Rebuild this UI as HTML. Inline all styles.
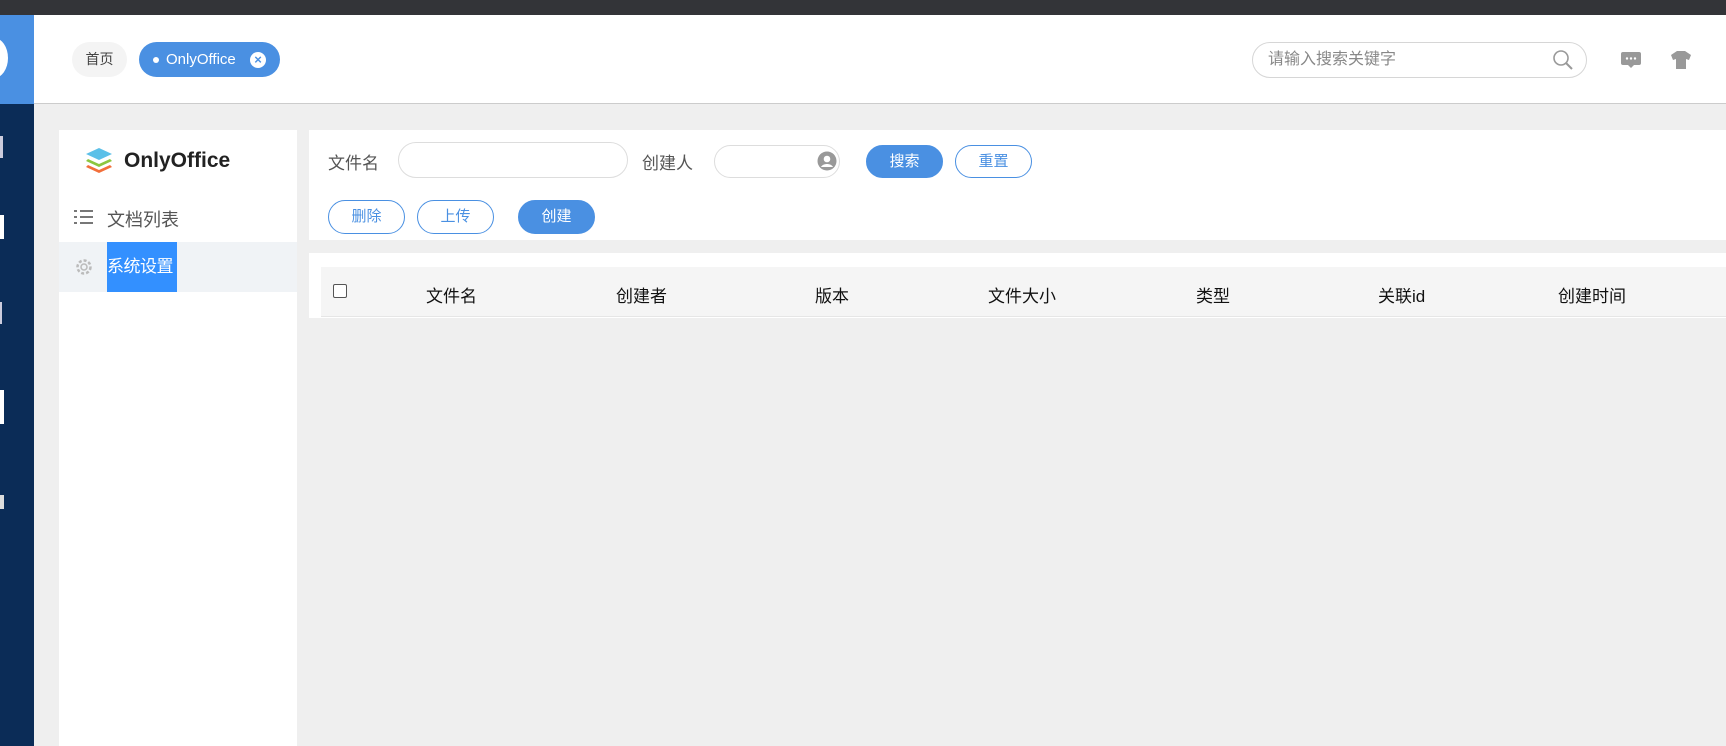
<!DOCTYPE html>
<html><head><meta charset="utf-8"><style>
*{box-sizing:border-box;margin:0;padding:0}
body{width:1726px;height:746px;overflow:hidden;background:#efefef;font-family:"Liberation Sans","Noto Sans CJK SC",sans-serif;position:relative;white-space:nowrap}
.a{position:absolute}
.btn{position:absolute;border:1px solid #4a90e2;border-radius:17px;color:#4a90e2;font-size:15px;text-align:center;background:#fff}
.btn.f{background:#4a90e2;color:#fff}
.th{position:absolute;top:282px;font-size:17px;color:#111}
</style></head><body>
<div class="a" style="left:0;top:0;width:1726px;height:15px;background:#333438"></div>
<div class="a" style="left:0;top:15px;width:34px;height:89px;background:#4a90e2"></div>
<div class="a" style="left:-20px;top:38px;width:28px;height:40px;border-radius:50%;background:#fff"></div>
<div class="a" style="left:0;top:104px;width:34px;height:642px;background:#0b2c57"></div>
<div class="a" style="left:0;top:136px;width:3px;height:22px;background:#ccd"></div>
<div class="a" style="left:0;top:215px;width:4px;height:24px;background:#fff"></div>
<div class="a" style="left:0;top:302px;width:2px;height:22px;background:#ccd"></div>
<div class="a" style="left:0;top:390px;width:4px;height:34px;background:#fff"></div>
<div class="a" style="left:0;top:495px;width:4px;height:14px;background:#ddd"></div>
<div class="a" style="left:34px;top:15px;width:1692px;height:89px;background:#fff;border-bottom:1px solid #ccc"></div>
<div class="a" style="left:72px;top:42px;width:55px;height:35px;border-radius:18px;background:#f4f4f4;font-size:14px;color:#444;line-height:35px;text-align:center">首页</div>
<div class="a" style="left:139px;top:42px;width:141px;height:35px;border-radius:18px;background:#4a90e2;color:#fff;font-size:15px;line-height:35px;padding-left:27px">OnlyOffice</div>
<div class="a" style="left:153px;top:57px;width:6px;height:6px;border-radius:50%;background:#fff"></div>
<div class="a" style="left:250px;top:52px;width:16px;height:16px;border-radius:50%;background:#fff;color:#4a90e2;font-size:13px;line-height:16px;text-align:center;font-weight:bold">×</div>
<div class="a" style="left:1252px;top:42px;width:335px;height:36px;border:1px solid #d6d6d6;border-radius:18px;font-size:16px;color:#888;line-height:34px;padding-left:15px">请输入搜索关键字</div>
<svg class="a" style="left:1552px;top:49px" width="22" height="22"><circle cx="9" cy="9" r="7" fill="none" stroke="#999" stroke-width="1.6"/><path d="M14 14l6 6" stroke="#999" stroke-width="2"/></svg>
<svg class="a" style="left:1620px;top:51px" width="22" height="18"><rect x="1" y="1" width="20" height="13" rx="2" fill="#999"/><path d="M8 14l3 3 3-3z" fill="#999"/><circle cx="7" cy="7.5" r="1.2" fill="#fff"/><circle cx="11" cy="7.5" r="1.2" fill="#fff"/><circle cx="15" cy="7.5" r="1.2" fill="#fff"/></svg>
<svg class="a" style="left:1670px;top:50px" width="22" height="20"><path d="M7 1h8l6 4-2 5-3-1v10H6V9L3 10 1 5z" fill="#999"/></svg>

<div class="a" style="left:59px;top:130px;width:238px;height:616px;background:#fff"></div>
<svg class="a" style="left:84px;top:147px" width="30" height="28"><path d="M15 1l13 6-13 6L2 7z" fill="#5bc0e8"/><path d="M4 12l11 5 11-5 2 2-13 6L2 14z" fill="#8cc63f"/><path d="M4 18l11 5 11-5 2 2-13 6L2 20z" fill="#f26f3b"/></svg>
<div class="a" style="left:124px;top:149px;font-size:21px;font-weight:bold;color:#222">OnlyOffice</div>
<svg class="a" style="left:74px;top:208px" width="20" height="18"><g fill="#777"><rect x="0" y="2" width="3" height="2"/><rect x="6" y="2" width="13" height="2"/><rect x="0" y="8" width="3" height="2"/><rect x="6" y="8" width="13" height="2"/><rect x="0" y="14" width="3" height="2"/><rect x="6" y="14" width="13" height="2"/></g></svg>
<div class="a" style="left:107px;top:206px;font-size:18px;color:#555">文档列表</div>
<div class="a" style="left:59px;top:242px;width:238px;height:50px;background:#f0f3f6"></div>
<svg class="a" style="left:75px;top:258px" width="18" height="18"><circle cx="9" cy="9" r="6.5" fill="none" stroke="#bbb" stroke-width="2.5" stroke-dasharray="3 2"/><circle cx="9" cy="9" r="3" fill="none" stroke="#bbb" stroke-width="1.5"/></svg>
<div class="a" style="left:107px;top:242px;width:70px;height:50px;background:#3390ff;color:#fff;font-size:17px;line-height:50px;letter-spacing:-0.5px;overflow:visible">系统设置</div>

<div class="a" style="left:309px;top:130px;width:1417px;height:110px;background:#fff"></div>
<div class="a" style="left:328px;top:149px;font-size:17px;color:#555">文件名</div>
<div class="a" style="left:398px;top:142px;width:230px;height:36px;border:1px solid #ddd;border-radius:18px"></div>
<div class="a" style="left:642px;top:149px;font-size:17px;color:#555">创建人</div>
<div class="a" style="left:714px;top:145px;width:126px;height:33px;border:1px solid #ddd;border-radius:17px"></div>
<svg class="a" style="left:817px;top:151px" width="20" height="20"><circle cx="10" cy="10" r="9.5" fill="#999"/><circle cx="10" cy="8" r="3.3" fill="#fff"/><path d="M4 16c2-4 10-4 12 0" fill="#fff"/></svg>
<div class="btn f" style="left:866px;top:145px;width:77px;height:33px;line-height:31px">搜索</div>
<div class="btn" style="left:955px;top:145px;width:77px;height:33px;line-height:31px">重置</div>
<div class="btn" style="left:328px;top:200px;width:77px;height:34px;line-height:32px">删除</div>
<div class="btn" style="left:417px;top:200px;width:77px;height:34px;line-height:32px">上传</div>
<div class="btn f" style="left:518px;top:200px;width:77px;height:34px;line-height:32px">创建</div>

<div class="a" style="left:309px;top:253px;width:1417px;height:65px;background:#fff"></div>
<div class="a" style="left:321px;top:267px;width:1405px;height:50px;background:#f5f5f5;border-bottom:1px solid #e6e6e6"></div>
<div class="a" style="left:333px;top:284px;width:14px;height:14px;border:1px solid #555;border-radius:2px;background:#fff"></div>
<div class="th" style="left:426px">文件名</div>
<div class="th" style="left:616px">创建者</div>
<div class="th" style="left:815px">版本</div>
<div class="th" style="left:988px">文件大小</div>
<div class="th" style="left:1196px">类型</div>
<div class="th" style="left:1378px">关联id</div>
<div class="th" style="left:1558px">创建时间</div>
</body></html>
